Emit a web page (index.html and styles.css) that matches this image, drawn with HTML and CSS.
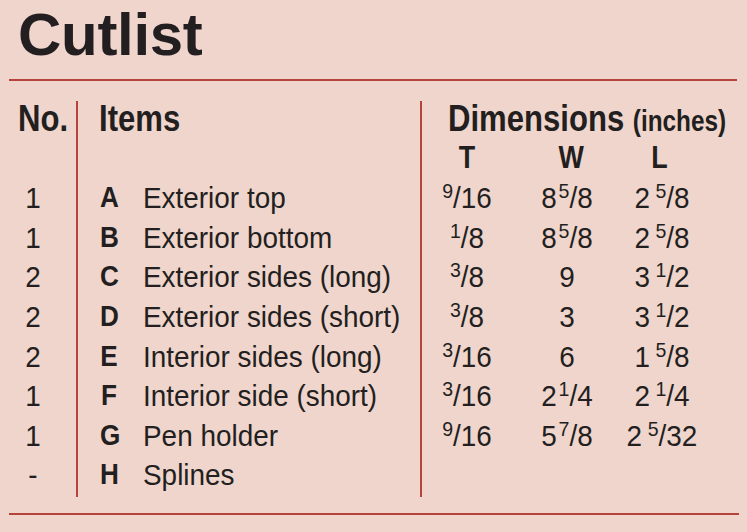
FILE: index.html
```html
<!DOCTYPE html>
<html lang="en">
<head>
<meta charset="utf-8">
<title>Cutlist</title>
<link rel="stylesheet" href="styles.css">
</head>
<body>
<div class="sheet">
  <header class="title-bar"><h1 class="title">Cutlist</h1></header>
  <div class="table">
    <div class="col col-no">
      <div class="row head1"><span class="cond">No.</span></div>
      <div class="row head2"></div>
      <div class="row num">1</div>
      <div class="row num">1</div>
      <div class="row num">2</div>
      <div class="row num">2</div>
      <div class="row num">2</div>
      <div class="row num">1</div>
      <div class="row num">1</div>
      <div class="row num">-</div>
    </div>
    <div class="col col-items">
      <div class="row head1"><span class="cond">Items</span></div>
      <div class="row head2"></div>
      <div class="row item"><span class="letter">A</span><span class="name">Exterior top</span></div>
      <div class="row item"><span class="letter">B</span><span class="name">Exterior bottom</span></div>
      <div class="row item"><span class="letter">C</span><span class="name">Exterior sides (long)</span></div>
      <div class="row item"><span class="letter">D</span><span class="name">Exterior sides (short)</span></div>
      <div class="row item"><span class="letter">E</span><span class="name">Interior sides (long)</span></div>
      <div class="row item"><span class="letter">F</span><span class="name">Interior side (short)</span></div>
      <div class="row item"><span class="letter">G</span><span class="name">Pen holder</span></div>
      <div class="row item"><span class="letter">H</span><span class="name">Splines</span></div>
    </div>
    <div class="col col-dims">
      <div class="row head1 dims-title"><span class="cond">Dimensions <span class="unit">(inches)</span></span></div>
      <div class="row head2 dims"><span class="c-t">T</span><span class="c-w">W</span><span class="c-l">L</span></div>
      <div class="row dims"><span class="c-t"><sup>9</sup>/16</span><span class="c-w">8<sup>5</sup>/8</span><span class="c-l">2<sup>5</sup>/8</span></div>
      <div class="row dims"><span class="c-t"><sup>1</sup>/8</span><span class="c-w">8<sup>5</sup>/8</span><span class="c-l">2<sup>5</sup>/8</span></div>
      <div class="row dims"><span class="c-t"><sup>3</sup>/8</span><span class="c-w">9</span><span class="c-l">3<sup>1</sup>/2</span></div>
      <div class="row dims"><span class="c-t"><sup>3</sup>/8</span><span class="c-w">3</span><span class="c-l">3<sup>1</sup>/2</span></div>
      <div class="row dims"><span class="c-t"><sup>3</sup>/16</span><span class="c-w">6</span><span class="c-l">1<sup>5</sup>/8</span></div>
      <div class="row dims"><span class="c-t"><sup>3</sup>/16</span><span class="c-w">2<sup>1</sup>/4</span><span class="c-l">2<sup>1</sup>/4</span></div>
      <div class="row dims"><span class="c-t"><sup>9</sup>/16</span><span class="c-w">5<sup>7</sup>/8</span><span class="c-l">2<sup>5</sup>/32</span></div>
      <div class="row dims"></div>
    </div>
  </div>
  <div class="bottom-rule"></div>
</div>
</body>
</html>
```

FILE: styles.css
```css
html, body {
  margin: 0;
  padding: 0;
  background: #efd5cc;
}

body {
  width: 747px;
  height: 532px;
  overflow: hidden;
  color: #231f20;
  font-family: "Liberation Sans", Arial, sans-serif;
}

.title-bar {
  margin-left: 9px;
  width: 728px;
  padding-top: 5px;
  padding-bottom: 14px;
  border-bottom: 2px solid #b5433c;
}

.title {
  margin: 0 0 0 9px;
  font-weight: bold;
  font-size: 60px;
  line-height: 60px;
  letter-spacing: -0.3px;
}

.table {
  display: flex;
  margin-top: 20px;
}

.col {
  display: flex;
  flex-direction: column;
  padding-bottom: 2px;
}

.col-no {
  width: 58px;
  padding-left: 18px;
}

.col-items {
  width: 321px;
  padding-left: 21px;
  border-left: 2px solid #b5433c;
}

.col-dims {
  width: 325px;
  border-left: 2px solid #b5433c;
}

.row {
  height: 39.6px;
  line-height: 39.6px;
  font-size: 30px;
  white-space: nowrap;
}

.head1 {
  height: 37.6px;
  line-height: 36.4px;
  font-size: 37px;
  font-weight: bold;
}

.head2 {
  line-height: 36.6px;
  font-size: 32px;
  font-weight: bold;
}

.cond {
  display: inline-block;
  transform: scaleX(0.84);
  transform-origin: left center;
}

.num {
  width: 30px;
  text-align: center;
  transform: scaleX(0.93);
}

.item {
  display: flex;
}

.letter {
  width: 20px;
  text-align: center;
  font-weight: bold;
  font-size: 29px;
  transform: scaleX(0.9);
}

.name {
  margin-left: 24px;
  transform: scaleX(0.93);
  transform-origin: left center;
}

.dims-title {
  padding-left: 26px;
}

.unit {
  font-size: 29px;
}

.dims {
  display: grid;
  grid-template-columns: 90px 110px 80px;
}

.dims > span {
  text-align: center;
  transform: scaleX(0.93);
}

.head2.dims > span {
  transform: scaleX(0.84);
}

.head2.dims .c-w {
  padding-left: 10px;
}

.head2.dims .c-l {
  padding-right: 6px;
}

sup {
  font-size: 21px;
  line-height: 0;
  vertical-align: 10px;
  margin-left: 2px;
}

.c-l sup {
  margin-left: 6px;
}

.c-t sup {
  margin-left: 0;
}

.bottom-rule {
  margin: 16px 0 0 9px;
  width: 730px;
  border-top: 2px solid #b5433c;
}
```
